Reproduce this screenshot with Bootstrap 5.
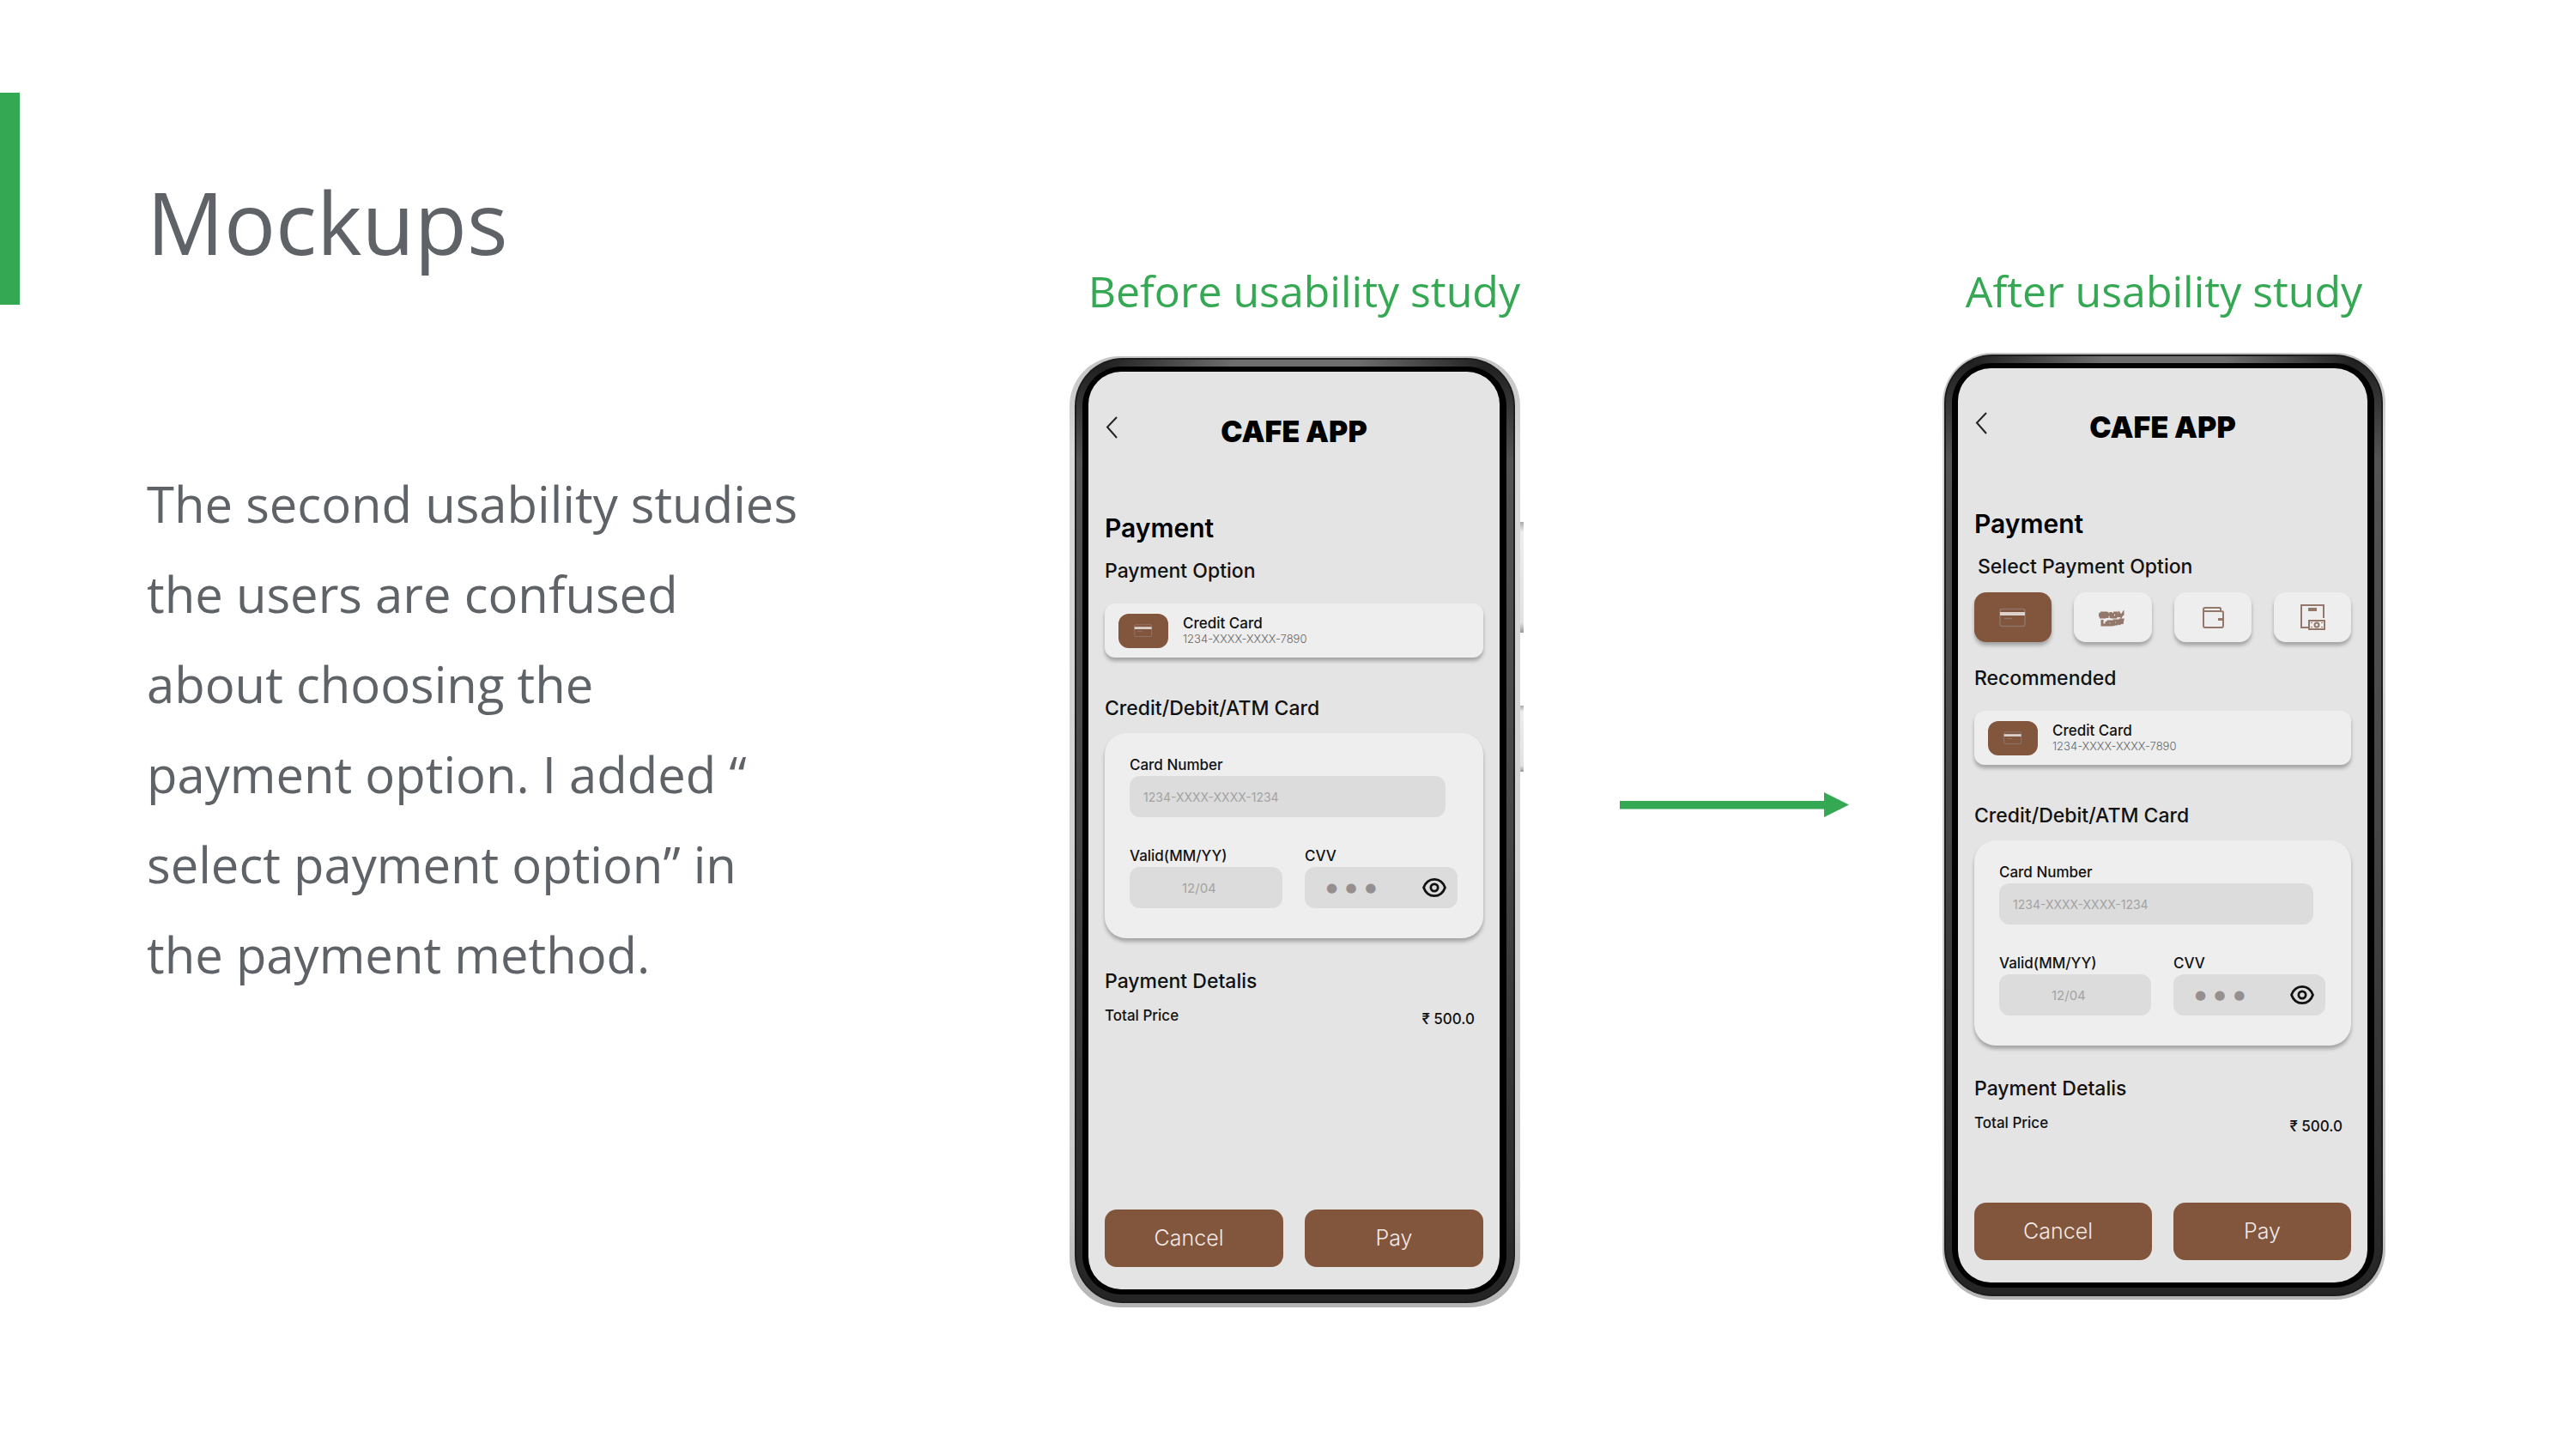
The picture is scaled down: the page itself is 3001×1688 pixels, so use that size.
<!DOCTYPE html>
<html lang="en">
<head>
<meta charset="utf-8">
<meta name="viewport" content="width=device-width, initial-scale=1">
<title>Mockups</title>
<link href="https://cdn.jsdelivr.net/npm/bootstrap@5.3.0/dist/css/bootstrap.min.css" rel="stylesheet">
<style>
  :root { --green: #34a853; --ink: #5f6368; --brown: #82553d; }
  body { background: #fff; color: var(--ink); font-family: "Open Sans", "Noto Sans", sans-serif; }
  .slide { min-height: 100vh; padding-right: 222px; }
  .accent { width: 23px; height: 247px; margin-top: 108px; background: var(--green); }
  .story { padding: 198px 0 0 148px; }
  .story h1 { font-size: 100px; line-height: 120px; font-weight: 400; margin: 0 0 216px; }
  .story p { font-size: 58px; line-height: 105px; max-width: 766px; margin: 0; }
  .study { padding-top: 309px; }
  .study figcaption { font-size: 50px; line-height: 60px; color: var(--green); white-space: nowrap; }
  .flow-arrow { margin: 923px 109px 0 116px; }

  /* handset */
  .handset { background: linear-gradient(#c4c4c4, #d9d9d9 10%, #cbcbcb 90%, #b4b4b4); border-radius: 58px; }
  .handset-before { width: 525px; margin-top: 46px; padding: 2px 6px 5px 6px; }
  .handset-after { width: 516px; margin-top: 42px; padding: 2px 3px 4px 2px; }
  .bezel { border-radius: 56px; padding: 10px 10px 10px 9px;
    background: linear-gradient(90deg, transparent 6%, #6e6e6e 36%, #6e6e6e 64%, transparent 94%) top / 100% 10px no-repeat,
      linear-gradient(#1c1c1c, #545454 11%, #464646 50%, #2c2c2c 90%, #242424);
    box-shadow: inset 0 0 0 2px #1d1d1d; }
  .glass { border-radius: 46px; padding: 6px 8px 6px 7px; background: #000; }
  .screen { background: #e4e4e4; border-radius: 38px; padding: 50px 19px 26px; color: #111; font-family: Inter, "Noto Sans", sans-serif; }
  .screen-before { min-height: 1069px; }
  .screen-after { min-height: 1065px; padding-top: 49px; }
  .side-key { left: 100%; width: 4px; background: linear-gradient(#aaa, #eee 9%, #e2e2e2 91%, #999); }
  .key-volume { top: 193px; height: 129px; }
  .key-power { top: 407px; height: 77px; }

  /* app */
  .app-header { display: grid; grid-template-columns: 1fr auto 1fr; line-height: 40px; margin-bottom: 76px; }
  .app-title { font-size: 34px; line-height: 40px; font-weight: 900; color: #000; margin: 0; }
  .plain-btn { border: 0; background: none; padding: 0; line-height: 0; }
  .back-btn { height: 30px; width: 18px; }
  .page-title { font-size: 30px; line-height: 32px; font-weight: 600; color: #000; margin: 0 0 20px; }
  .section-title { font-size: 23px; line-height: 28px; font-weight: 500; margin: 0; }
  .raised { background: #eee; box-shadow: 0 4px 4px rgba(0, 0, 0, .28); }
  .option-row { margin: 16px 0 28px; gap: 26px; }
  .option-tile { flex: 1; height: 58px; border: 0; border-radius: 14px; padding: 0; color: #93776a; }
  .option-tile.chosen { background: var(--brown); }
  .saved-card { height: 63px; border-radius: 12px; margin: 24px 0 45px; padding-left: 16px; gap: 17px; }
  .saved-icon { width: 58px; height: 40px; border-radius: 12px; background: var(--brown); }
  .small-text { font-size: 17px; line-height: 20px; font-weight: 500; }
  .saved-name { line-height: 18px; }
  .saved-number { font-size: 13px; line-height: 18px; font-weight: 300; color: #666; }
  .card-form { border-radius: 25px; margin: 15px 0 36px; padding: 27px 30px 35px 29px; }
  .card-form label { display: block; margin-bottom: 3px; }
  .field { display: block; width: 100%; height: 48px; border: 0; border-radius: 12px; background: #dcdcdc; color: #a3a3a3; font-size: 14px; padding: 0 16px; }
  .field-wrap { padding-right: 14px; margin-bottom: 35px; }
  .field-pair { display: grid; grid-template-columns: 1fr 1fr; gap: 26px; }
  .field-date { padding-left: 61px; font-size: 15px; }
  .field-cvv { display: flex; padding: 0 12px 0 25px; }
  .field-cvv input { border: 0; background: none; padding: 0; width: 100%; min-width: 0; color: #958f8f; font: 15px "DejaVu Sans", sans-serif; }
  .total-row { height: 24px; margin-top: 16px; padding-right: 10px; }
  .actions { display: grid; grid-template-columns: 1fr 1fr; gap: 25px; }
  .action-btn { height: 67px; border: 0; border-radius: 14px; background: var(--brown); color: #f1e9e5; font-size: 25px; font-weight: 300; }
  @media (max-width: 2300px) { .slide { flex-wrap: wrap; } }
</style>
</head>
<body>
<svg class="d-none" xmlns="http://www.w3.org/2000/svg">
  <symbol id="i-back" viewBox="0 0 18 30"><path d="M14 3 3 14.500 14 27" fill="none" stroke="#222" stroke-width="2"/></symbol>
  <symbol id="i-card" viewBox="0 0 32 24"><rect x="1" y="1.500" width="29" height="20" rx="2.500" fill="none" stroke="#8d7468" stroke-width="1.500"/><path d="M1 7h29" stroke="#dcd3ce" stroke-width="4"/><path d="M6 12.500h9" stroke="#8d7468" stroke-width="1.500"/></symbol>
  <symbol id="i-eye" viewBox="0 0 32 26"><path d="M2.500 13C5 6 10 2.500 16 2.500S27 6 29.500 13C27 20 22 23.500 16 23.500S5 20 2.500 13Z" fill="none" stroke="#111" stroke-width="3"/><circle cx="16" cy="13" r="4.500" fill="none" stroke="#111" stroke-width="3"/></symbol>
</svg>

<main class="slide d-flex align-items-start">
  <div class="accent flex-shrink-0"></div>
  <section class="story flex-grow-1">
    <h1>Mockups</h1>
    <p>The second usability studies the users are confused about choosing the payment option. I added “ select payment option” in the payment method.</p>
  </section>

  <figure class="study m-0 flex-shrink-0">
    <figcaption class="text-end">Before usability study</figcaption>
    <div class="handset handset-before position-relative">
      <span class="side-key key-volume position-absolute"></span>
      <span class="side-key key-power position-absolute"></span>
      <div class="bezel"><div class="glass"><div class="screen screen-before d-flex flex-column">
        <header class="app-header">
          <button class="plain-btn back-btn" type="button" aria-label="Back"><svg width="18" height="30"><use href="#i-back"/></svg></button>
          <h2 class="app-title">CAFE APP</h2>
        </header>
        <h3 class="page-title">Payment</h3>
        <h4 class="section-title">Payment Option</h4>
        <div class="saved-card raised d-flex align-items-center">
          <span class="saved-icon d-flex align-items-center justify-content-center"><svg width="22" height="18"><use href="#i-card"/></svg></span>
          <div><div class="small-text saved-name">Credit Card</div><div class="saved-number">1234-XXXX-XXXX-7890</div></div>
        </div>
        <h4 class="section-title">Credit/Debit/ATM Card</h4>
        <form class="card-form raised">
          <div class="field-wrap">
            <label class="small-text" for="num-a">Card Number</label>
            <input class="field" id="num-a" type="text" value="1234-XXXX-XXXX-1234">
          </div>
          <div class="field-pair">
            <div><label class="small-text" for="date-a">Valid(MM/YY)</label><input class="field field-date" id="date-a" type="text" value="12/04"></div>
            <div><label class="small-text" for="cvv-a">CVV</label>
              <div class="field field-cvv align-items-center"><input id="cvv-a" type="text" value="●&nbsp;&nbsp;●&nbsp;&nbsp;●"><button class="plain-btn" type="button" aria-label="Show CVV"><svg width="30" height="24"><use href="#i-eye"/></svg></button></div></div>
          </div>
        </form>
        <h4 class="section-title">Payment Detalis</h4>
        <div class="total-row small-text d-flex justify-content-between"><span>Total Price</span><span class="align-self-end">₹ 500.0</span></div>
        <div class="actions mt-auto">
          <button class="action-btn ps-1 pe-3" type="button">Cancel</button>
          <button class="action-btn" type="button">Pay</button>
        </div>
      </div></div></div>
    </div>
  </figure>

  <svg class="flow-arrow flex-shrink-0" width="267" height="30" viewBox="0 0 267 30" fill="#34a853"><path d="M0 10h238V0l29 14.500L238 29V19.500H0z"/></svg>

  <figure class="study m-0 flex-shrink-0">
    <figcaption class="text-center">After usability study</figcaption>
    <div class="handset handset-after">
      <div class="bezel"><div class="glass"><div class="screen screen-after d-flex flex-column">
        <header class="app-header">
          <button class="plain-btn back-btn" type="button" aria-label="Back"><svg width="18" height="30"><use href="#i-back"/></svg></button>
          <h2 class="app-title">CAFE APP</h2>
        </header>
        <h3 class="page-title">Payment</h3>
        <h4 class="section-title ps-1">Select Payment Option</h4>
        <div class="option-row d-flex">
          <button class="option-tile raised chosen" type="button" aria-label="Card"><svg width="32" height="24"><use href="#i-card"/></svg></button>
          <button class="option-tile raised" type="button" aria-label="UPI">
            <svg width="32" height="20" viewBox="0 0 32 20" fill="none" stroke="currentColor" stroke-width="3"><path d="M2 3h6l-1 3H1l1-3M1 8h6l1-3M10 2v7m0-4h4m0-3v7m3-6-1 5h4l1-5h-4m6 5 1-4 2 3 2-3 0 2M4 11v6h5v-4m2 0h4v4h-4zm6 5 1-6h4l-1 4h-4m7 1 1-6h3l-1 5"/></svg></button>
          <button class="option-tile raised" type="button" aria-label="Wallet">
            <svg width="28" height="28" viewBox="0 0 28 28" fill="none" stroke="currentColor" stroke-width="2"><path d="M23 3H5a2 2 0 0 0-2 2v19a2 2 0 0 0 2 2h19a2 2 0 0 0 2-2V9a2 2 0 0 0-2-2H4M23 3v4"/><path d="M20 15h5v3h-5z" fill="currentColor" stroke="none"/></svg></button>
          <button class="option-tile raised" type="button" aria-label="Cash on delivery">
            <svg width="32" height="32" viewBox="0 0 32 32" fill="none" stroke="currentColor" stroke-width="2"><path d="M11 28H3V2h26v15"/><path d="M11 7h10" stroke-width="4"/><path d="M12 20h18v10H12z"/><circle cx="21" cy="25" r="2.500"/><path d="M15 22v1m12-1v1m-12 4v1m12-1v1"/></svg></button>
        </div>
        <h4 class="section-title">Recommended</h4>
        <div class="saved-card raised d-flex align-items-center">
          <span class="saved-icon d-flex align-items-center justify-content-center"><svg width="22" height="18"><use href="#i-card"/></svg></span>
          <div><div class="small-text saved-name">Credit Card</div><div class="saved-number">1234-XXXX-XXXX-7890</div></div>
        </div>
        <h4 class="section-title">Credit/Debit/ATM Card</h4>
        <form class="card-form raised">
          <div class="field-wrap">
            <label class="small-text" for="num-b">Card Number</label>
            <input class="field" id="num-b" type="text" value="1234-XXXX-XXXX-1234">
          </div>
          <div class="field-pair">
            <div><label class="small-text" for="date-b">Valid(MM/YY)</label><input class="field field-date" id="date-b" type="text" value="12/04"></div>
            <div><label class="small-text" for="cvv-b">CVV</label>
              <div class="field field-cvv align-items-center"><input id="cvv-b" type="text" value="●&nbsp;&nbsp;●&nbsp;&nbsp;●"><button class="plain-btn" type="button" aria-label="Show CVV"><svg width="30" height="24"><use href="#i-eye"/></svg></button></div></div>
          </div>
        </form>
        <h4 class="section-title">Payment Detalis</h4>
        <div class="total-row small-text d-flex justify-content-between"><span>Total Price</span><span class="align-self-end">₹ 500.0</span></div>
        <div class="actions mt-auto">
          <button class="action-btn ps-1 pe-3" type="button">Cancel</button>
          <button class="action-btn" type="button">Pay</button>
        </div>
      </div></div></div>
    </div>
  </figure>
</main>
<script src="https://cdn.jsdelivr.net/npm/bootstrap@5.3.0/dist/js/bootstrap.bundle.min.js"></script>
</body>
</html>
